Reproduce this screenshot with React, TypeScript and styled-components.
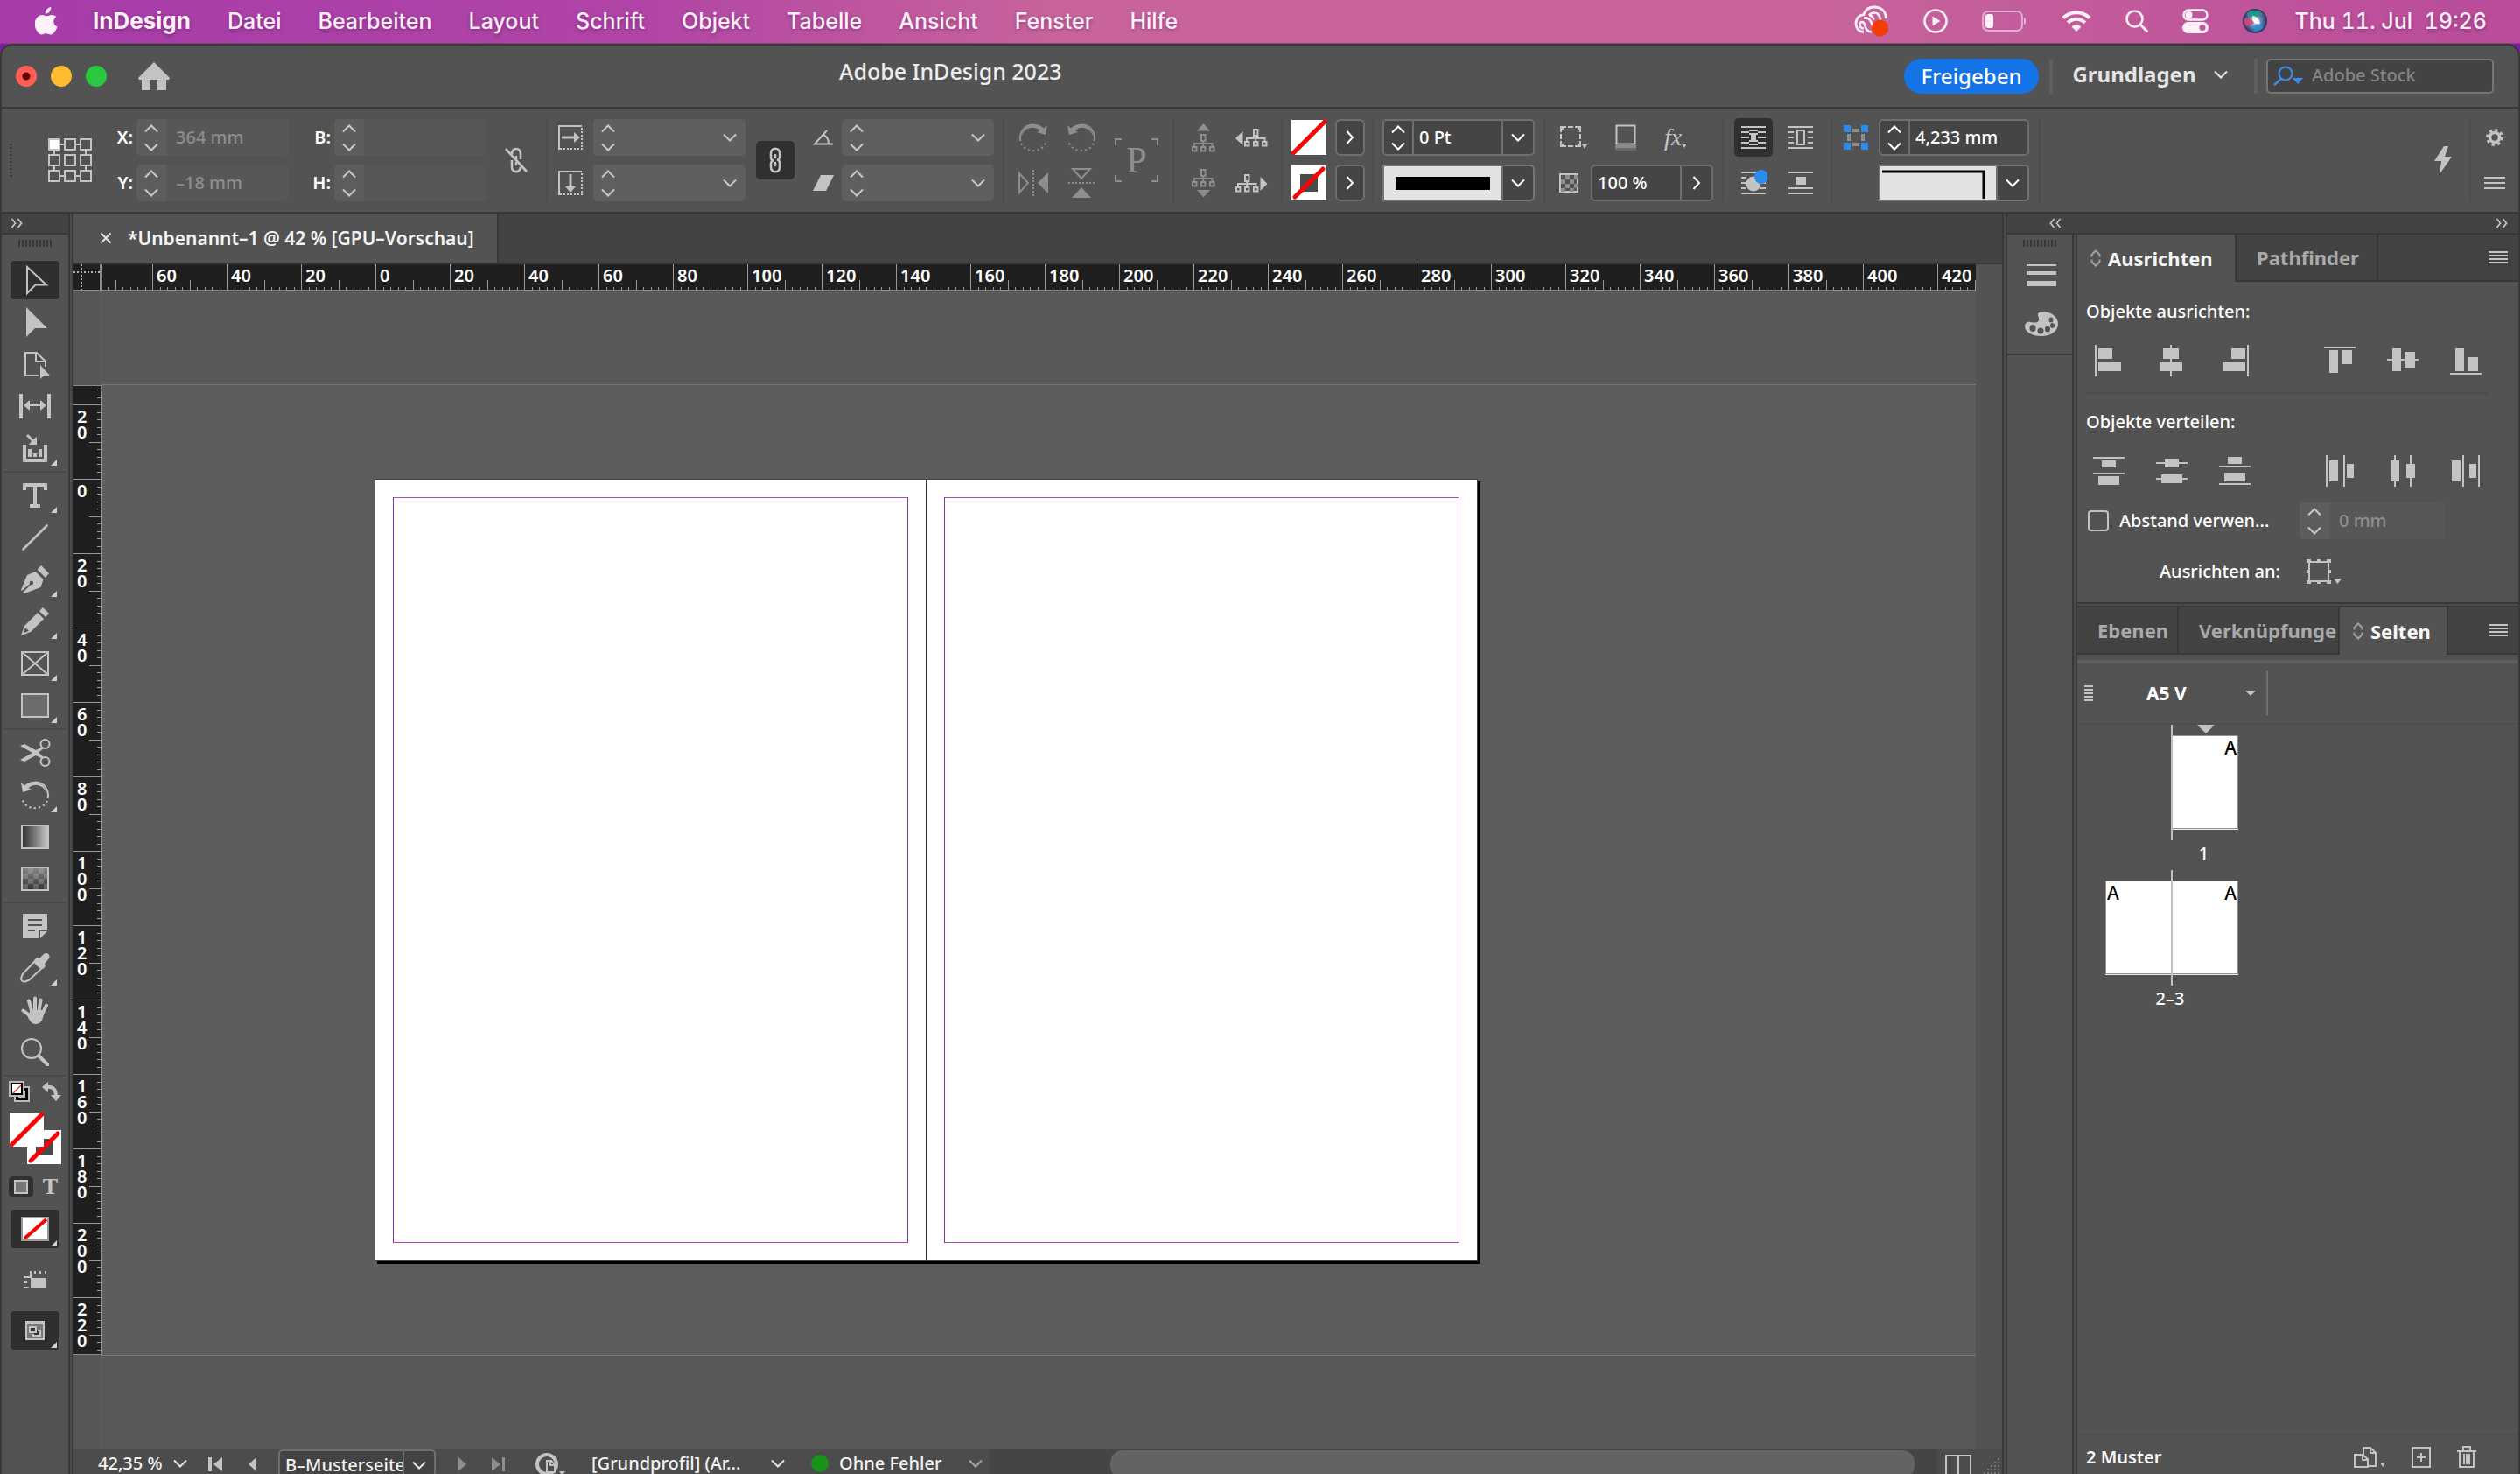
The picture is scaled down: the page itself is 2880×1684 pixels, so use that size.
import React from 'react';
import styled, { createGlobalStyle, css } from 'styled-components';

const LINE = '#383838';
const PANEL = '#535353';
const DARK = '#434343';
const ICON = '#c3c3c3';
const DIM = '#8e8e8e';
const UI = '"Noto Sans", "Open Sans", sans-serif';
const SYS = 'Inter, "Liberation Sans", sans-serif';

const Global = createGlobalStyle`
  *, *::before, *::after { box-sizing: border-box; }
  html, body, #root { height: 100%; }
  body { margin: 0; overflow: hidden; background: #7a1fa0; color: #f2f2f2; font: 500 20px/26px ${UI}; }
  button, input, select { font: inherit; color: inherit; margin: 0; padding: 0; border: 0; background: none; border-radius: 0; }
  button { display: flex; align-items: center; justify-content: center; cursor: pointer; }
  svg { display: block; flex: none; }
`;

/* ---------- shared pieces ---------- */

type IcProps = { w: number; h: number; c?: string; children: React.ReactNode };
const Ic = ({ w, h, c = ICON, children }: IcProps) => (
  <svg width={w} height={h} viewBox={`0 0 ${w} ${h}`} fill="none" stroke="none" color={c} aria-hidden="true">
    {children}
  </svg>
);

const Chevron = ({ c = '#e6e6e6' }: { c?: string }) => (
  <Ic w={16} h={10} c={c}><path d="M1 1.5 8 8.5 15 1.5" stroke="currentColor" strokeWidth="2" /></Ic>
);
const ChevronUp = ({ c = '#c8c8c8' }: { c?: string }) => (
  <Ic w={16} h={10} c={c}><path d="M1 8.5 8 1.5 15 8.5" stroke="currentColor" strokeWidth="2" /></Ic>
);
const ChevronRight = () => (
  <Ic w={10} h={16}><path d="M1.5 1 8 8 1.5 15" stroke="#fff" strokeWidth="2" /></Ic>
);
const Lines = ({ w = 22, n = 4, gap = 4, t = 2 }: { w?: number; n?: number; gap?: number; t?: number }) => (
  <Ic w={w} h={(n - 1) * gap + t}>
    {Array.from({ length: n }, (_, i) => <rect key={i} y={i * gap} width={w} height={t} fill="currentColor" />)}
  </Ic>
);
const DoubleArrow = ({ left }: { left?: boolean }) => (
  <Ic w={14} h={12}>
    <path d={left ? 'M5.5 1 1.5 6l4 5M12.5 1 8.5 6l4 5' : 'M1.5 1l4 5-4 5M8.5 1l4 5-4 5'} stroke="currentColor" strokeWidth="1.8" />
  </Ic>
);

const VDivider = styled.div`
  flex: none;
  width: 6px;
  border: solid ${LINE};
  border-width: 0 2px;
  background: #4b4b4b;
`;

/* ---------- macOS menu bar ---------- */

const Screen = styled.div`
  height: 100vh;
  display: flex;
  flex-direction: column;
`;

const MenuBar = styled.header`
  flex: none;
  height: 50px;
  display: flex;
  align-items: center;
  padding: 0 38px 2px 40px;
  background: linear-gradient(90deg, #a63caa 0%, #b044a6 25%, #c8649b 42%, #c8649b 72%, #b94b9b 100%);
  border-bottom: 1px solid #8f3f7c;
  font: 500 25px/32px ${SYS};
  color: #fdf0f8;
  text-shadow: 0 2px 4px rgba(60, 0, 60, 0.35);
`;

const Menus = styled.nav`
  display: flex;
  gap: 42px;
  margin-left: 40px;
`;

const MenuItem = styled.button<{ $bold?: boolean }>`
  font-weight: ${p => (p.$bold ? 700 : 500)};
  font-size: ${p => (p.$bold ? 26 : 25)}px;
  text-shadow: inherit;
`;

const Tray = styled.div`
  margin-left: auto;
  display: flex;
  align-items: center;
  gap: 39px;
`;

const Clock = styled.time`
  white-space: pre;
  margin-left: -8px;
  font-variant-numeric: tabular-nums;
`;

const Apple = () => (
  <Ic w={26} h={32} c="#fdf0f8">
    <path fill="currentColor" d="M18.3 0c.2 2-.6 3.9-1.7 5.2-1.2 1.4-3 2.4-4.8 2.3-.2-1.9.7-3.9 1.8-5.1C14.8 1 16.7.1 18.3 0ZM24.6 11.1c-2 1.2-3.3 3-3.3 5.4 0 2.7 1.7 5 4.2 6-.5 1.700-1.3 3.300-2.300 4.800-1.400 2.100-2.900 4.200-5.200 4.200-2.200 0-2.800-1.300-5.400-1.300-2.500 0-3.300 1.300-5.400 1.300-2.200 0-3.800-2.300-5.200-4.400C-1 22.700-1.300 15.500 2.600 11.700c1.500-1.700 3.600-2.700 5.700-2.700 2.200 0 3.500 1.300 5.300 1.300 1.700 0 2.800-1.300 5.300-1.300 1.900 0 4 .8 5.700 2.100Z" />
  </Ic>
);

const trayIcons = {
  cloud: (
    <Ic w={40} h={36} c="#fdf0f8">
      <path d="M11 30.500C5 30 2 26 2 21c0-6 4-10 9-10.500C13 4.500 18 2 23 2c8 0 13 5 13.500 13" stroke="currentColor" strokeWidth="2.800" />
      <path d="M20 30.500C14 30.500 13 25 11.500 21c-1-3-4.500-2.500-5 .5-.5 3 1.500 5 4.500 5" stroke="currentColor" strokeWidth="2.600" />
      <path d="M11 14.500c5-1 7.500 2 9 6 1 3 2 4.500 4 5M17 11.500c3-4 9-4 11.500 0 1 2 1.500 4 1.500 6" stroke="currentColor" strokeWidth="2.600" />
      <path d="M17 11.500c2.500 0 4.500 2 5.500 5" stroke="currentColor" strokeWidth="2.600" />
      <circle cx="29.500" cy="26" r="9.500" fill="#f23c00" />
    </Ic>
  ),
  play: (
    <Ic w={28} h={28} c="#fdf0f8">
      <circle cx="14" cy="14" r="12.500" stroke="currentColor" strokeWidth="2.600" />
      <path d="M10.500 8.500v11l9-5.500z" fill="currentColor" />
    </Ic>
  ),
  battery: (
    <Ic w={52} h={24} c="#fdf0f8">
      <rect x="1" y="1" width="45" height="22" rx="6" stroke="currentColor" strokeWidth="2" opacity=".55" />
      <rect x="4" y="4" width="9" height="16" rx="3" fill="currentColor" />
      <path d="M48 8c3 1 3 7 0 8z" fill="currentColor" opacity=".6" />
    </Ic>
  ),
  wifi: (
    <Ic w={34} h={26} c="#fdf0f8">
      <path d="M2 9.500a21 21 0 0 1 30 0M7.200 14.800a13.700 13.700 0 0 1 19.600 0" stroke="currentColor" strokeWidth="4" />
      <path d="M11.500 19.500a8 8 0 0 1 11 0L17 25z" fill="currentColor" />
    </Ic>
  ),
  search: (
    <Ic w={26} h={26} c="#fdf0f8">
      <circle cx="10.500" cy="10.500" r="9" stroke="currentColor" strokeWidth="2.600" />
      <path d="m17 17 7.500 7.500" stroke="currentColor" strokeWidth="3" strokeLinecap="round" />
    </Ic>
  ),
  control: (
    <Ic w={30} h={28} c="#fdf0f8">
      <rect x="1.500" y="1.500" width="27" height="11" rx="5.500" stroke="currentColor" strokeWidth="2.400" />
      <circle cx="7.500" cy="7" r="4" fill="currentColor" />
      <rect y="15" width="30" height="13" rx="6.500" fill="currentColor" />
      <circle cx="23" cy="21.500" r="3.500" fill="#c0559b" />
    </Ic>
  ),
  siri: (
    <svg width="28" height="28" viewBox="0 0 28 28" aria-hidden="true">
      <defs>
        <radialGradient id="orb"><stop offset="0" stopColor="#fff" /><stop offset=".45" stopColor="#6f8fc4" /><stop offset="1" stopColor="#2a2f5c" /></radialGradient>
      </defs>
      <circle cx="14" cy="14" r="14" fill="url(#orb)" />
      <path d="M4 6C8 0 20 0 25 8c-6-4-10 2-12 5C9 8 6 7 4 6Z" fill="#1f9d7a" opacity=".85" />
      <path d="M2 11c5-1 9 1 11 5-3 3-7 3-9 4-2-3-3-6-2-9Z" fill="#e0406e" opacity=".85" />
      <path d="M16 17c4 0 7 2 8 4-3 4-9 6-12 4 0-3 1-6 4-8Z" fill="#2c8fd0" opacity=".8" />
      <path d="M11 8c3 0 8 3 9 9-4 2-9-1-9-9Z" fill="#fff" opacity=".9" />
    </svg>
  ),
};

/* ---------- window and title bar ---------- */

const Window = styled.div`
  flex: 1;
  min-height: 0;
  display: flex;
  flex-direction: column;
  background: ${PANEL};
  border: solid ${LINE};
  border-width: 2px 2px 0;
  border-radius: 14px 14px 0 0;
  overflow: hidden;
`;

const TitleBar = styled.div`
  flex: none;
  height: 72px;
  border-bottom: 2px solid ${LINE};
  display: grid;
  grid-template-columns: 23fr auto 40fr;
  align-items: center;
`;

const TitleLeft = styled.div`
  display: flex;
  align-items: center;
  gap: 16px;
  padding-left: 16px;
`;

const Light = styled.button<{ $c: string }>`
  width: 24px;
  height: 24px;
  border-radius: 50%;
  background: ${p => p.$c};
`;

const HomeButton = styled.button`margin-left: 20px;`;

const WindowTitle = styled.h1`
  margin: 0;
  padding-bottom: 12px;
  font: 500 25px/32px ${UI};
  color: #ececec;
  white-space: nowrap;
`;

const TitleRight = styled.div`
  display: flex;
  align-items: center;
  justify-content: flex-end;
  padding-right: 28px;
  height: 40px;
`;

const ShareButton = styled.button`
  width: 154px;
  height: 40px;
  margin-right: 12px;
  border-radius: 20px;
  background: #1473e6;
  color: #fff;
  font: 500 24px/30px ${UI};
`;

const TitleRule = styled.i`
  width: 4px;
  height: 40px;
  background: #5f5f5f;
`;

const Workspace = styled.button`
  gap: 20px;
  width: 230px;
  padding: 0 8px 4px 0;
  font: 700 24px/30px ${UI};
  color: #e4e4e4;
`;

const StockSearch = styled.label`
  display: flex;
  align-items: center;
  gap: 10px;
  width: 260px;
  height: 40px;
  margin-left: 10px;
  padding-left: 6px;
  border: 2px solid #757575;
  border-radius: 5px;
  background: ${DARK};
  input { min-width: 0; flex: 1; outline: 0; padding-bottom: 2px; }
  input::placeholder { color: #858585; opacity: 1; }
`;

/* ---------- control bar ---------- */

const ControlBar = styled.div`
  flex: none;
  height: 120px;
  padding-top: 12px;
  border-bottom: 2px solid ${LINE};
  display: flex;
  align-items: flex-start;
`;

const Group = styled.div<{ $w?: number; $cols?: string; $align?: string; $first?: boolean }>`
  flex: ${p => (p.$w ? `0 0 ${p.$w}px` : '1')};
  height: 94px;
  display: grid;
  grid-template-columns: ${p => p.$cols || '1fr'};
  grid-template-rows: 42px 42px;
  row-gap: 10px;
  align-items: center;
  justify-items: center;
  justify-content: ${p => p.$align || 'start'};
  border-left: ${p => (p.$first ? '0' : '2px solid #4c4c4c')};
`;

const Tall = styled.div<{ $col: number; $start?: boolean }>`
  grid-row: 1 / 3;
  grid-column: ${p => p.$col};
  justify-self: ${p => (p.$start ? 'start' : 'center')};
  padding-left: ${p => (p.$start ? '9px' : '0')};
`;

const Row = styled.div<{ $gap: number }>`
  width: 100%;
  display: flex;
  align-items: center;
  gap: ${p => p.$gap}px;
  padding-left: 16px;
`;

const FieldLabel = styled.label`
  justify-self: end;
  padding-right: 4px;
  color: #fff;
  font-weight: 600;
`;

type Tone = 'off' | 'soft' | 'edit';
const FieldBox = styled.div<{ $tone: Tone; $w: number }>`
  display: flex;
  width: ${p => p.$w}px;
  height: 42px;
  border-radius: 5px;
  overflow: hidden;
  ${p => p.$tone === 'off' && css`background: #575757; color: ${DIM};`}
  ${p => p.$tone === 'soft' && css`background: #5f5f5f;`}
  ${p => p.$tone === 'edit' && css`background: #454545; border: 2px solid #6e6e6e; color: #fff;`}
  input { flex: 1; min-width: 0; outline: 0; }
`;

const Stepper = styled.div<{ $tone: Tone }>`
  flex: none;
  width: 34px;
  display: flex;
  flex-direction: column;
  background: ${p => (p.$tone === 'off' ? '#5d5d5d' : 'transparent')};
  border-right: ${p => (p.$tone === 'edit' ? '2px solid #6e6e6e' : '0')};
  button { flex: 1; }
`;

const DropButton = styled.button<{ $lined?: boolean }>`
  flex: none;
  width: 36px;
  border-left: ${p => (p.$lined ? '2px solid #6e6e6e' : '0')};
`;

const ValueInput = styled.input<{ $pad: number }>`padding-left: ${p => p.$pad}px;`;

type FieldProps = { id: string; label?: string; tone: Tone; w?: number; value?: string; drop?: boolean; pad?: number };
const Field = ({ id, label, tone, w = 174, value = '', drop, pad = 11 }: FieldProps) => {
  const c = tone === 'edit' ? '#fff' : '#c8c8c8';
  return (
    <FieldBox $tone={tone} $w={w}>
      <Stepper $tone={tone}>
        <button aria-label="Erhöhen"><ChevronUp c={c} /></button>
        <button aria-label="Verringern"><Chevron c={c} /></button>
      </Stepper>
      <ValueInput $pad={pad} id={id} aria-label={label} defaultValue={value} disabled={tone === 'off'} />
      {drop && <DropButton $lined={tone === 'edit'} aria-label="Liste öffnen"><Chevron c={c} /></DropButton>}
    </FieldBox>
  );
};

const IconButton = styled.button<{ $on?: boolean; $w?: number; $h?: number }>`
  width: ${p => (p.$w ? `${p.$w}px` : 'auto')};
  height: ${p => (p.$h ? `${p.$h}px` : 'auto')};
  border-radius: 5px;
  background: ${p => (p.$on ? '#303030' : 'transparent')};
`;

const BoxButton = styled.button`
  width: 34px;
  height: 42px;
  border: 2px solid #6e6e6e;
  border-radius: 6px;
  background: #454545;
`;

const StrokeSample = styled.div<{ $corner?: boolean }>`
  display: flex;
  width: ${p => (p.$corner ? 172 : 174)}px;
  height: 42px;
  border: 2px solid #757575;
  border-radius: 0 5px 5px 0;
  background: #454545;
`;

const Swatch = styled.div`
  flex: 1;
  display: flex;
  align-items: center;
  justify-content: center;
  background: #e2e2e2;
`;

const PText = styled.span`
  display: grid;
  place-items: center;
  font: 400 42px/50px "Liberation Serif", serif;
  color: ${DIM};
  svg, b { grid-area: 1 / 1; font-weight: 400; }
`;

const FxText = styled.span`
  display: flex;
  align-items: flex-end;
  font: italic 400 28px/30px "Liberation Serif", serif;
  color: ${ICON};
`;

const RefGrid = () => (
  <Ic w={50} h={50}>
    <path d="M14 7h4M32 7h4M14 43h4M32 43h4M7 14v4M43 14v4M7 32v4M43 32v4" stroke="currentColor" strokeWidth="2" />
    {[1, 19, 37].map(y => [1, 19, 37].map(x => (
      <rect key={`${x}-${y}`} x={x} y={y} width="12" height="12" stroke="currentColor" strokeWidth="2" fill={x + y === 2 ? '#fff' : 'none'} />
    )))}
  </Ic>
);

const ChainOff = () => (
  <Ic w={26} h={30}>
    <path d="M8 8c0-8 10-8 10 0v6M8 15v7c0 8 9 8 10 1" stroke="currentColor" strokeWidth="2.600" />
    <path d="M13 10v4M13 17v4" stroke="currentColor" strokeWidth="2.400" />
    <path d="M1 2l24 26" stroke="currentColor" strokeWidth="2.600" />
  </Ic>
);
const Chain = () => (
  <Ic w={14} h={30}>
    <path d="M5 16c-2-1-3-2-3-4V7c0-7 10-7 10 0v4c0 1-.5 2-1 3M9 14c2 1 3 2 3 4v5c0 7-10 7-10 0v-4c0-1 .5-2 1-3" stroke="currentColor" strokeWidth="2.600" />
    <path d="M7 9v3M7 18v3" stroke="currentColor" strokeWidth="2.600" strokeLinecap="round" />
  </Ic>
);
const ScaleIcon = ({ down }: { down?: boolean }) => (
  <Ic w={28} h={28}>
    <path d="M1 28V1h26" stroke="currentColor" strokeWidth="2" />
    <path d="M27 3v24M2 27h26" stroke="currentColor" strokeWidth="2" strokeDasharray="2 2" />
    {down
      ? <path d="M12.500 4h3v14h4.500l-6 7-6-7h4.500z" fill="currentColor" />
      : <path d="M4 12.500h14V8l7 6-7 6v-4.500H4z" fill="currentColor" />}
  </Ic>
);
const Angle = () => (
  <Ic w={24} h={18}><path d="M16 1 2 16.500h21M12 6c4 2 6 6 6 10" stroke="currentColor" strokeWidth="2" /></Ic>
);
const Shear = () => (
  <Ic w={24} h={18}><path d="M9 0h15l-9 18H0z" fill="currentColor" /></Ic>
);
const Rotate = ({ ccw, c = DIM }: { ccw?: boolean; c?: string }) => (
  <Ic w={34} h={34} c={c}>
    <g transform={ccw ? undefined : 'translate(34 0) scale(-1 1)'}>
      <path d="M31.500 21C34 12 27 2.500 18 2.500c-5 0-9 2-12 6" stroke="currentColor" strokeWidth="2" />
      <path d="M1 3l2 11 10-3-3.500-2C16 3 27 5 30.500 16 30 5 15-3 5 6.500z" fill="currentColor" />
      <path d="M3 23.500C8 35 25 35 31 24" stroke="currentColor" strokeWidth="2.200" strokeDasharray="2 3.400" />
    </g>
  </Ic>
);
const FlipH = () => (
  <Ic w={36} h={30} c={DIM}>
    <path d="M2 4v22l10-11z" stroke="currentColor" strokeWidth="2" />
    <path d="M35 3v24L23 15z" fill="currentColor" />
    <path d="M18 0v30" stroke="currentColor" strokeWidth="2" strokeDasharray="2 2" />
  </Ic>
);
const FlipV = () => (
  <Ic w={30} h={34} c={DIM}>
    <path d="M5 1h20L15 12z" stroke="currentColor" strokeWidth="2" />
    <path d="M4 34h22L15 22z" fill="currentColor" />
    <path d="M0 17h30" stroke="currentColor" strokeWidth="2" strokeDasharray="2 2" />
  </Ic>
);
const Tree = () => (
  <>
    <rect x="11" y="1" width="4.500" height="7" stroke="currentColor" strokeWidth="2" />
    <path d="M13.200 8v6M3 15v-4h20.500v4" stroke="currentColor" strokeWidth="2" />
    {[1, 11, 21].map(x => <rect key={x} x={x} y="15" width="4.500" height="4.500" stroke="currentColor" strokeWidth="2" />)}
  </>
);
const TreeV = ({ down }: { down?: boolean }) => (
  <Ic w={27} h={33} c={DIM}>
    <g transform={down ? undefined : 'translate(0 12)'}><Tree /></g>
    <path d={down ? 'M6 24h15l-7.500 8.500z' : 'M6 8.500h15L13.500 0z'} fill="currentColor" />
  </Ic>
);
const TreeH = ({ right }: { right?: boolean }) => (
  <Ic w={37} h={21}>
    <g transform={right ? undefined : 'translate(10 0)'}><Tree /></g>
    <path d={right ? 'M28.500 3v16l8-8z' : 'M8.500 3v16L0 11z'} fill="currentColor" />
  </Ic>
);
const NoneFill = ({ s = 40 }: { s?: number }) => (
  <Ic w={s} h={s}>
    <rect width={s} height={s} fill="#fff" />
    <path d={`M2 ${s - 2}L${s - 2} 2`} stroke="#f60505" strokeWidth="5" strokeLinecap="square" />
  </Ic>
);
const NoneStroke = ({ s = 40 }: { s?: number }) => (
  <Ic w={s} h={s}>
    <rect width={s} height={s} fill="#fff" />
    <rect x="10" y="10" width={s - 20} height={s - 20} fill="#4a4a4a" />
    <path d={`M4 ${s - 4}L${s - 4} 4`} stroke="#f60505" strokeWidth="5" strokeLinecap="round" />
  </Ic>
);
const Corners = () => (
  <Ic w={32} h={28}>
    <rect x="2" y="2" width="22" height="22" stroke="currentColor" strokeWidth="2" />
    <path d="M8 0h2v5H8zM16 0h2v5h-2zM8 21h2v5H8zM16 21h2v5h-2zM0 8h5v2H0zM0 16h5v2H0zM21 8h5v2h-5zM21 16h5v2h-5z" fill={PANEL} />
    <path d="M1 1h4v4H1zM21 1h4v4h-4zM1 21h4v4H1zM21 21h4v4h-4z" fill="currentColor" />
    <path d="M26 22h6l-3 5z" fill="currentColor" />
  </Ic>
);
const ShadowBox = () => (
  <Ic w={24} h={30}>
    <rect x="1.500" y="1.500" width="21" height="21" stroke="currentColor" strokeWidth="2" />
    <rect y="24" width="24" height="3" fill="currentColor" opacity=".5" />
    <rect y="27" width="24" height="3" fill="currentColor" opacity=".2" />
  </Ic>
);
const Checker = () => (
  <Ic w={22} h={22}>
    <rect x="1" y="1" width="20" height="20" stroke="currentColor" strokeWidth="2" />
    <path d="M7 2h5v5H7zM17 2h4v5h-4zM2 7h5v5H2zM12 7h5v5h-5zM7 12h5v5H7zM17 12h4v5h-4zM2 17h5v4H2zM12 17h5v4h-5z" fill="#8c8c8c" />
  </Ic>
);
const Wrap = ({ kind }: { kind: 'none' | 'box' | 'shape' | 'jump' }) => (
  <Ic w={32} h={30}>
    {kind === 'jump' ? (
      <>
        <path d="M2 3h28M2 21h28M2 27h28" stroke="currentColor" strokeWidth="2" />
        <rect x="10" y="8" width="12" height="9" fill="currentColor" />
      </>
    ) : (
      <>
        <path d="M2 3h28M2 27h28" stroke="currentColor" strokeWidth="2" />
        {kind === 'none'
          ? <path d="M2 9h9M21 9h9M2 15h9M21 15h9M2 21h9M21 21h9M11 7h10M11 11h10M13 13h6M13 17h6M11 19h10M11 23h10M13 15h6" stroke="currentColor" strokeWidth="2" />
          : <path d="M2 9h6M2 15h6M2 21h6M24 9h6M24 15h6M24 21h6" stroke="currentColor" strokeWidth="2" />}
        {kind === 'box' && <path d="M12 7h8v16h-8z" stroke="currentColor" strokeWidth="2" />}
        {kind === 'shape' && <><circle cx="16" cy="16" r="8.500" fill="currentColor" /><circle cx="25" cy="8" r="8" fill="#2b8ceb" /></>}
      </>
    )}
  </Ic>
);
const CornerOptions = () => (
  <Ic w={28} h={28}>
    <path d="M0 0h8v8H0zM20 0h8v8h-8zM0 20h8v8H0zM20 20h8v8h-8z" fill="#2b8ceb" />
    <path d="M10 4h8v4h-8zM10 20h8v4h-8zM4 10h4v8H4zM20 10h4v8h-4z" fill="#8e8e8e" />
  </Ic>
);
const Bolt = () => (
  <Ic w={20} h={32}><path d="M11 0 0 17h8L6 32 20 12h-8l4-12z" fill="currentColor" /></Ic>
);
const Gear = () => (
  <Ic w={20} h={20}>
    <circle cx="10" cy="10" r="5.500" stroke="currentColor" strokeWidth="3.600" />
    <circle cx="10" cy="10" r="8.500" stroke="currentColor" strokeWidth="3" strokeDasharray="3.340 3.340" />
  </Ic>
);

/* ---------- tool box ---------- */

const Body = styled.div`
  flex: 1;
  min-height: 0;
  display: flex;
`;

const ToolColumn = styled.aside`
  flex: none;
  width: 76px;
  display: flex;
  flex-direction: column;
`;

const ColumnHead = styled.div<{ $between?: boolean }>`
  flex: none;
  height: 24px;
  display: flex;
  align-items: center;
  background: ${DARK};
  border-bottom: 2px solid ${LINE};
  padding: ${p => (p.$between ? '0 12px 0 48px' : '0 10px')};
  justify-content: ${p => (p.$between ? 'space-between' : 'flex-start')};
`;

const Grip = styled.i`
  display: block;
  flex: none;
  width: 38px;
  height: 8px;
  margin: 6px auto 2px;
  background: repeating-linear-gradient(90deg, #383838 0 2px, transparent 2px 4px);
`;

const Tools = styled.div`
  display: flex;
  flex-direction: column;
  align-items: center;
  gap: 4px;
  padding-top: 14px;
`;

const ToolRule = styled.i`
  width: 72px;
  height: 2px;
  background: #4a4a4a;
`;

const ToolButton = styled.button<{ $on?: boolean; $more?: boolean }>`
  position: relative;
  width: 56px;
  height: 44px;
  border-radius: 4px;
  background: ${p => (p.$on ? '#2f2f2f' : 'transparent')};
  ${p => p.$more && css`
    &::after {
      content: '';
      position: absolute;
      right: 3px;
      bottom: 2px;
      border: solid transparent;
      border-width: 0 0 7px 7px;
      border-bottom-color: #d0d0d0;
    }
  `}
`;

const Pair = styled.div<{ $h: number }>`
  display: flex;
  align-items: center;
  justify-content: space-between;
  width: 60px;
  height: ${p => p.$h}px;
`;

const FillStroke = styled.div`
  display: grid;
  grid-template-columns: 20px 19px 19px;
  grid-template-rows: 20px 19px 19px;
  margin: 7px 0 11px;
`;
const FillCell = styled.button`grid-area: 1 / 1 / 3 / 3; z-index: 1; border: solid ${PANEL}; border-width: 0 1px 1px 0;`;
const StrokeCell = styled.button`grid-area: 2 / 2 / 4 / 4;`;

const TypeText = styled.span`
  font: 700 26px/24px "Liberation Serif", serif;
  color: ${ICON};
  padding-right: 4px;
`;

const tools: Array<{ name: string; more?: boolean; on?: boolean; icon: React.ReactNode } | 'rule'> = [
  { name: 'Auswahl', on: true, icon: <Ic w={36} h={36}><path d="M9 3v30l9.500-9.500H31z" stroke="currentColor" strokeWidth="2" /></Ic> },
  { name: 'Direktauswahl', icon: <Ic w={36} h={36}><path d="M8 1v34l10-10h14z" fill="currentColor" /></Ic> },
  { name: 'Seite', icon: (
    <Ic w={36} h={36}>
      <path d="M22 31H7V5h13l10 10v6M19 5v10h11" stroke="currentColor" strokeWidth="2" />
      <path d="M24 19v16l4-4h7z" fill="currentColor" />
    </Ic>
  ) },
  { name: 'Lücke', icon: (
    <Ic w={36} h={28}><path d="M0 0h4v28H0zM32 0h4v28h-4zM5 13l7-6v5h12V7l7 6-7 6v-5H12v5z" fill="currentColor" /></Ic>
  ) },
  { name: 'Inhaltsaufnahme', more: true, icon: (
    <Ic w={28} h={32}>
      <path d="M0 12h4v16h20V12h4v20H0z" fill="currentColor" />
      <path d="M6 17h4v4H6zM18 17h4v4h-4zM6 22h4v4H6zM12 22h4v4h-4zM18 22h4v4h-4zM4 2l2-2 6 6 4-3v9H7l3-4z" fill="currentColor" />
    </Ic>
  ) },
  'rule',
  { name: 'Text', more: true, icon: <Ic w={28} h={28}><path d="M0 0h28v8h-4V4h-8v20h4v4H8v-4h4V4H4v4H0z" fill="currentColor" /></Ic> },
  { name: 'Linie', icon: <Ic w={30} h={30}><path d="M1.500 28.500l27-27" stroke="currentColor" strokeWidth="2.600" strokeLinecap="round" /></Ic> },
  { name: 'Zeichenstift', more: true, icon: (
    <Ic w={32} h={32}>
      <path d="M23 0l9 9-4 5-9.500-9.500zM16.500 7l9 9-3 9L4 32l-2-1 9-9c3 1 4-3 2-4s-4 0-3 3L1 29 0 28 7 11z" fill="currentColor" />
    </Ic>
  ) },
  { name: 'Buntstift', more: true, icon: (
    <Ic w={32} h={32}>
      <path d="M25 0l7 7-4 4-7-7zM19 6l7 7L11 28 0 32l4-11zM5 23l-2 6 6-2z" fill="currentColor" fillRule="evenodd" />
    </Ic>
  ) },
  { name: 'Rechteckrahmen', more: true, icon: <Ic w={32} h={28}><path d="M1 1h30v26H1zL31 27M31 1 1 27" stroke="currentColor" strokeWidth="2" /></Ic> },
  { name: 'Rechteck', more: true, icon: <Ic w={32} h={28}><rect x="1" y="1" width="30" height="26" fill="#6c6c6c" stroke="currentColor" strokeWidth="2" /></Ic> },
  'rule',
  { name: 'Schere', icon: (
    <Ic w={36} h={32}>
      <circle cx="29.500" cy="6" r="5" stroke="currentColor" strokeWidth="2" />
      <circle cx="29.500" cy="26" r="5" stroke="currentColor" strokeWidth="2" />
      <path d="M1 8l5-2 13 7 7-4 2 2-6 4.500 6 5.500-2 2-7-4-13 7-5-2 14-8z" fill="currentColor" />
    </Ic>
  ) },
  { name: 'Drehen', more: true, icon: <Rotate ccw c={ICON} /> },
  { name: 'Verlaufsfarbfeld', icon: (
    <Ic w={32} h={28}>
      <defs><linearGradient id="grad"><stop offset="0" stopColor="#2c2c2c" /><stop offset="1" stopColor="#c8c8c8" /></linearGradient></defs>
      <rect x="1" y="1" width="30" height="26" fill="url(#grad)" stroke="currentColor" strokeWidth="2" />
    </Ic>
  ) },
  { name: 'Weiche Verlaufskante', icon: (
    <Ic w={32} h={28}>
      <defs><linearGradient id="feather" x2="0" y2="1"><stop offset="0" stopColor="#8a8a8a" /><stop offset="1" stopColor="#303030" /></linearGradient></defs>
      <rect x="1" y="1" width="30" height="26" fill="url(#feather)" stroke="currentColor" strokeWidth="2" />
      <path d="M8 2h6v6H8zM20 2h6v6h-6zM2 8h6v6H2zM14 8h6v6h-6zM26 8h4v6h-4zM8 14h6v6H8zM20 14h6v6h-6zM2 20h6v6H2zM14 20h6v6h-6zM26 20h4v6h-4z" fill="#b0b0b0" opacity=".35" />
    </Ic>
  ) },
  'rule',
  { name: 'Notiz', icon: (
    <Ic w={28} h={28}>
      <path d="M0 0h28v18H18v10H0zM6 6v2h16V6zM6 12v2h16v-2zM6 18v2h8v-2zM20 20h8l-8 8z" fill="currentColor" fillRule="evenodd" />
    </Ic>
  ) },
  { name: 'Pipette', more: true, icon: (
    <Ic w={34} h={34}>
      <path d="M17 9 3 23.500c-1 2-1 3-2 5.500 0 2 2 4 4.500 3.500 2-.5 3-1 5-2L25 17" stroke="currentColor" strokeWidth="2" />
      <path d="M16 8l3-3 3 1 5-5c4-3 8 1 6 5l-5 6 1 3-3 3-4-1-6-6z" fill="currentColor" />
    </Ic>
  ) },
  { name: 'Hand', icon: (
    <Ic w={32} h={32}>
      <path d="M2.500 16.500 11 23M9 5.500l3.500 13M16 2.500V19M22.500 4.500 20 20M29 10.500 24 21" stroke="currentColor" strokeWidth="4" strokeLinecap="round" />
      <path d="M9 20l2-4h15c0 9-2 16-9.500 16C12 32 9 27 7 22z" fill="currentColor" />
    </Ic>
  ) },
  { name: 'Zoom', icon: (
    <Ic w={32} h={32}>
      <circle cx="12" cy="12" r="11" stroke="currentColor" strokeWidth="2" />
      <path d="M20 20l10.500 10.500" stroke="currentColor" strokeWidth="4" strokeLinecap="round" />
    </Ic>
  ) },
  'rule',
];

/* ---------- document area ---------- */

const DocArea = styled.main`
  flex: 1;
  min-width: 0;
  display: flex;
  flex-direction: column;
`;

const TabStrip = styled.div`
  flex: none;
  height: 58px;
  display: flex;
  background: ${DARK};
  border-bottom: 2px solid ${LINE};
`;

const DocTab = styled.div`
  display: flex;
  align-items: center;
  gap: 18px;
  padding: 0 26px 0 30px;
  background: ${PANEL};
  border-right: 2px solid ${LINE};
  color: #f4f4f4;
  font-weight: 600;
  font-size: 21px;
  white-space: nowrap;
`;

const RulerRow = styled.div`
  flex: none;
  height: 31px;
  display: flex;
`;

const RulerCorner = styled.div`
  flex: none;
  width: 32px;
  background: #1f1f1f;
  border: solid #8a8a8a;
  border-width: 0 2px 2px 0;
`;

const HStrip = styled.div`
  flex: 1;
  min-width: 0;
  display: flex;
  overflow-x: clip;
  background: #1f1f1f;
  border-bottom: 2px solid #8a8a8a;
`;

const HCell = styled.div`
  flex: none;
  width: 85px;
  display: grid;
  border-left: 1px solid #9a9a9a;
  font: 600 20px/26px ${UI};
  color: #fff;
  &:first-child { margin-left: -27px; }
  span, svg { grid-area: 1 / 1; }
  span { padding-left: 4px; height: 29px; }
  svg { align-self: end; }
`;

const Gutter = styled.div`
  flex: none;
  width: 30px;
  background: ${PANEL};
`;

const Band = styled.div<{ $low?: boolean }>`
  flex: none;
  height: ${p => (p.$low ? 108 : 107)}px;
  display: flex;
  > i { flex: none; width: 32px; background: #565656; border-right: 1px solid #606060; }
  > b { flex: 1; background: #585858; border: solid #757575; border-width: ${p => (p.$low ? '1px 0 0' : '0 0 1px')}; }
`;

const CanvasRow = styled.div`
  flex: 1;
  min-height: 0;
  display: flex;
`;

const VStrip = styled.div`
  flex: none;
  width: 32px;
  overflow-y: clip;
  background: #1f1f1f;
  border: solid #8a8a8a;
  border-width: 1px 1px 1px 0;
`;

const VCell = styled.div`
  height: 85px;
  display: flex;
  justify-content: space-between;
  border-top: 1px solid #9a9a9a;
  font: 600 20px/18px ${UI};
  color: #fff;
  &:first-child { margin-top: -64px; }
  span { width: 17px; padding: 4px 0 0 4px; word-break: break-all; }
`;

const Pasteboard = styled.div`
  position: relative;
  flex: 1;
  background: #5d5d5d;
`;

/* The spread is an object on the free pasteboard, measured from the ruler origin. */
const Spread = styled.div`
  position: absolute;
  left: 312px;
  top: 107px;
  width: 1261px;
  height: 894px;
  display: flex;
  border: 1px solid #444;
  background: #fff;
  box-shadow: 4px 4px 0 -1px #000, 3px 3px 0 0 #000;
`;

const PageArea = styled.div`
  flex: 1;
  padding: 20px;
  & + & { flex: none; width: 630px; border-left: 1px solid #333; }
  &::before {
    content: '';
    display: block;
    height: 100%;
    border: 1px solid;
    border-color: #ae4cbd #7a35a4;
  }
`;

const hMarks = Array.from({ length: 26 }, (_, i) => Math.abs(i * 20 - 80));
const vMarks = Array.from({ length: 14 }, (_, i) => Math.abs(i * 20 - 40));
const minor = [1, 2, 3, 4, 5, 6, 7, 8, 9];

const HTicks = () => (
  <Ic w={84} h={12} c="#9a9a9a">
    {minor.map(i => {
      const t = i === 5 ? 11 : 3;
      return <rect key={i} x={Math.round(i * 8.5) - 1} y={12 - t} width="1" height={t} fill="currentColor" />;
    })}
  </Ic>
);
const VTicks = () => (
  <Ic w={14} h={84} c="#9a9a9a">
    {minor.map(i => {
      const t = i === 5 ? 13 : 4;
      return <rect key={i} y={Math.round(i * 8.5) - 1} x={14 - t} height="1" width={t} fill="currentColor" />;
    })}
  </Ic>
);

/* ---------- status bar ---------- */

const StatusBar = styled.footer`
  flex: none;
  height: 28px;
  display: flex;
  align-items: flex-start;
  background: #4c4c4c;
  overflow: hidden;
`;

const StatusSelect = styled.div<{ $w: number; $ml: number; $boxed?: boolean }>`
  flex: none;
  display: grid;
  grid-template-columns: 1fr auto;
  align-items: center;
  height: 32px;
  width: ${p => p.$w}px;
  margin-left: ${p => p.$ml}px;
  select { grid-area: 1 / 1 / 2 / 3; appearance: none; outline: 0; height: 32px; padding-right: 24px; line-height: 32px; overflow: hidden; }
  svg { grid-area: 1 / 2; pointer-events: none; }
  ${p => p.$boxed && css`
    grid-template-columns: 1fr 34px;
    justify-items: center;
    border: 2px solid #6e6e6e;
    border-radius: 5px;
    background: #434343;
    padding-left: 6px;
    select { grid-area: 1 / 1; width: 100%; padding: 0; border-right: 2px solid #6e6e6e; }
  `}
`;

const StatusIcon = styled.button<{ $w: number }>`
  flex: none;
  width: ${p => p.$w}px;
  height: 34px;
`;

const Dot = styled.i`
  flex: none;
  width: 20px;
  height: 20px;
  margin: 6px 0 0 30px;
  border-radius: 50%;
  background: #189318;
`;

const ScrollTrack = styled.div`
  flex: 1;
  height: 28px;
  margin-left: 8px;
  padding: 1px 26px 0 138px;
  background: #454545;
  &::before {
    content: '';
    display: block;
    height: 32px;
    border-radius: 14px;
    background: #636363;
  }
`;

const StatusEnd = styled.div`
  flex: none;
  width: 74px;
  display: flex;
  align-items: flex-start;
  gap: 14px;
  padding: 6px 0 0 9px;
`;

/* ---------- right docks ---------- */

const RightSide = styled.aside`
  flex: none;
  width: 584px;
  display: flex;
  flex-direction: column;
`;

const RightBody = styled.div`
  flex: 1;
  min-height: 0;
  display: flex;
`;

const IconDock = styled.div`
  flex: none;
  width: 74px;
`;

const DockSet = styled.div`
  display: flow-root;
  height: 138px;
  border-bottom: 2px solid ${LINE};
`;

const DockButtons = styled.div`
  display: flex;
  flex-direction: column;
  align-items: center;
  gap: 28px;
  padding: 18px 0 0 4px;
`;

const Panels = styled.div`
  flex: 1;
  min-width: 0;
  display: flex;
  flex-direction: column;
`;

const PanelTabs = styled.div`
  flex: none;
  height: 54px;
  display: flex;
`;

const PanelTab = styled.button<{ $on?: boolean; $w: number }>`
  flex: none;
  width: ${p => p.$w}px;
  gap: 8px;
  justify-content: flex-start;
  overflow: hidden;
  white-space: nowrap;
  padding-left: ${p => (p.$on ? 15 : 23)}px;
  font: 700 22px/30px ${UI};
  color: ${p => (p.$on ? '#f6f6f6' : '#a9a9a9')};
  background: ${p => (p.$on ? PANEL : DARK)};
  border: solid ${LINE};
  border-width: ${p => (p.$on ? '0 2px 0 0' : '0 2px 2px 0')};
`;

const TabMenu = styled.div`
  flex: 1;
  display: flex;
  align-items: center;
  justify-content: flex-end;
  padding-right: 12px;
  background: ${DARK};
  border-bottom: 2px solid ${LINE};
`;

const AlignBody = styled.section`
  flex: none;
  height: 366px;
  padding: 22px 34px 0 10px;
`;

const PanelHeading = styled.h2`
  margin: 0;
  color: #fff;
  font: 500 20px/24px ${UI};
`;

const AlignRow = styled.div<{ $rule?: boolean }>`
  display: flex;
  justify-content: space-between;
  height: ${p => (p.$rule ? 82 : 56)}px;
  margin-bottom: ${p => (p.$rule ? 20 : 10)}px;
  padding: 26px 8px 0;
  border-bottom: ${p => (p.$rule ? '2px solid #4c4c4c' : '0')};
`;

const AlignSet = styled.div`
  display: flex;
  align-items: flex-start;
  gap: 36px;
`;

const SpacingRow = styled.div`
  display: flex;
  align-items: center;
  height: 44px;
  margin-top: 23px;
  label { display: flex; align-items: center; gap: 12px; width: 244px; color: #fff; white-space: nowrap; }
`;

const Check = styled.input`
  appearance: none;
  flex: none;
  width: 24px;
  height: 24px;
  &&& { border: 2px solid ${ICON}; border-radius: 4px; margin-left: 2px; }
`;

const AlignTo = styled.div`
  display: flex;
  align-items: center;
  gap: 30px;
  padding: 22px 0 0 84px;
  color: #fff;
`;

const PanelGap = styled.div`
  flex: none;
  height: 6px;
  border: solid ${LINE};
  border-width: 2px 0;
  background: #4b4b4b;
`;

const PagesHead = styled.div`
  flex: none;
  height: 74px;
  display: flex;
  align-items: center;
  margin-top: 6px;
  padding-left: 8px;
  border-top: 4px solid #5e5e5e;
  border-bottom: 2px solid #4e4e4e;
`;

const SizeSelect = styled.div`
  display: grid;
  align-items: center;
  width: 200px;
  height: 50px;
  padding-right: 12px;
  border-right: 2px solid #6f6f6f;
  select { grid-area: 1 / 1; appearance: none; outline: 0; padding-left: 61px; color: #fff; font-weight: 700; font-size: 21px; }
  svg { grid-area: 1 / 1; justify-self: end; pointer-events: none; }
`;

const PageList = styled.ol`
  flex: 1;
  min-height: 0;
  margin: 0;
  padding: 0 0 0 32px;
  list-style: none;
`;

const PageItem = styled.li`
  width: 152px;
  height: 166px;
  display: grid;
  grid-template-columns: 75px 2px 75px;
  grid-template-rows: 12px 107px 13px 34px;
`;

const Spine = styled.i`
  grid-area: 1 / 2 / 4 / 3;
  background: #c0c0c0;
`;

const Thumb = styled.button<{ $left?: boolean }>`
  grid-area: ${p => (p.$left ? '2 / 1' : '2 / 3')};
  align-items: flex-start;
  justify-content: ${p => (p.$left ? 'flex-start' : 'flex-end')};
  padding: 0 1px;
  background: #fff;
  border: solid #909090;
  border-width: ${p => (p.$left ? '1px 0 1px 1px' : '1px 1px 1px 0')};
  box-shadow: 0 1px 0 #f0f0f0;
  color: #000;
  font: 500 21px/26px ${UI};
`;

const PageNo = styled.span<{ $whole?: boolean }>`
  grid-area: ${p => (p.$whole ? '4 / 1 / 5 / 4' : '4 / 3')};
  justify-self: center;
  padding: 2px 4px 0 0;
  color: #fff;
`;

const Marker = styled.svg`
  grid-area: 1 / 3;
  justify-self: center;
`;

const PagesFoot = styled.div`
  flex: none;
  height: 46px;
  display: flex;
  align-items: center;
  gap: 30px;
  padding: 6px 48px 0 10px;
  border-top: 2px solid #4e4e4e;
  font-weight: 600;
  color: #f6f6f6;
  span { margin-right: auto; }
`;

const Sort = () => (
  <Ic w={12} h={20} c="#a0a0a0"><path d="M1.500 8.500V6L6 1.500 10.500 6v2.500M1.500 11.500V14L6 18.500l4.500-4.500v-2.500" stroke="currentColor" strokeWidth="2" /></Ic>
);

const alignA = [
  ['Linke Kanten', 'M2 0h2v36H2zM6 4h16v12H6zM6 20h26v10H6z'],
  ['Horizontal zentrieren', 'M16 0h2v36h-2zM8 4h18v12H8zM4 20h26v10H4z'],
  ['Rechte Kanten', 'M32 0h2v36h-2zM14 4h16v12H14zM4 20h26v10H4z'],
];
const alignB = [
  ['Obere Kanten', 'M0 2h36v2H0zM6 6h10v26H6zM20 6h12v16H20z'],
  ['Vertikal zentrieren', 'M0 16h36v2H0zM6 4h10v26H6zM20 8h12v18H20z'],
  ['Untere Kanten', 'M0 32h36v2H0zM6 4h10v26H6zM20 14h12v16H20z'],
];
const distA = [
  ['Obere Kanten verteilen', 'M0 2h36v2H0zM10 6h16v8H10zM0 20h36v2H0zM6 24h24v10H6z'],
  ['Vertikal verteilen', 'M0 8h36v2H0zM10 4h16v10H10zM0 26h36v2H0zM6 22h24v10H6z'],
  ['Untere Kanten verteilen', 'M10 2h16v8H10zM0 12h36v2H0zM6 20h24v10H6zM0 32h36v2H0z'],
];
const distB = [
  ['Linke Kanten verteilen', 'M2 0h2v36H2zM6 6h10v24H6zM22 0h2v36h-2zM26 10h8v16h-8z'],
  ['Horizontal verteilen', 'M8 0h2v36H8zM4 6h10v24H4zM26 0h2v36h-2zM22 10h10v16H22z'],
  ['Rechte Kanten verteilen', 'M2 6h10v24H2zM14 0h2v36h-2zM22 10h8v16h-8zM32 0h2v36h-2z'],
];
const AlignButtons = ({ set }: { set: string[][] }) => (
  <AlignSet>
    {set.map(([name, d]) => <button key={name} aria-label={name}><Ic w={36} h={36}><path d={d} fill="currentColor" /></Ic></button>)}
  </AlignSet>
);

const menuNames = ['InDesign', 'Datei', 'Bearbeiten', 'Layout', 'Schrift', 'Objekt', 'Tabelle', 'Ansicht', 'Fenster', 'Hilfe'];

export default function App() {
  return (
    <Screen>
      <Global />
      <MenuBar>
        <Apple />
        <Menus>
          {menuNames.map((m, i) => <MenuItem key={m} $bold={i === 0}>{m}</MenuItem>)}
        </Menus>
        <Tray>
          {trayIcons.cloud}{trayIcons.play}{trayIcons.battery}{trayIcons.wifi}{trayIcons.search}{trayIcons.control}{trayIcons.siri}
          <Clock>{'Thu 11. Jul  19:26'}</Clock>
        </Tray>
      </MenuBar>

      <Window>
        <TitleBar>
          <TitleLeft>
            <Light $c="radial-gradient(circle, #6b0000 0 4px, #ff5f57 5px)" aria-label="Schließen" />
            <Light $c="#febc2e" aria-label="Minimieren" />
            <Light $c="#28c840" aria-label="Vollbild" />
            <HomeButton aria-label="Startseite">
              <Ic w={36} h={32}><path d="M18 0 0 18l1 2h3v12h10V20h8v12h10V20h3l1-2z" fill="currentColor" /></Ic>
            </HomeButton>
          </TitleLeft>
          <WindowTitle>Adobe InDesign 2023</WindowTitle>
          <TitleRight>
            <ShareButton>Freigeben</ShareButton>
            <TitleRule />
            <Workspace>Grundlagen <Chevron /></Workspace>
            <TitleRule />
            <StockSearch>
              <Ic w={34} h={24} c="#3b8fe8">
                <circle cx="14" cy="9" r="7.500" stroke="currentColor" strokeWidth="2" />
                <path d="M9 15l-8 7" stroke="currentColor" strokeWidth="2.600" />
                <path d="M22 14h12l-6 7z" fill="currentColor" />
              </Ic>
              <input placeholder="Adobe Stock" aria-label="Adobe Stock" />
            </StockSearch>
          </TitleRight>
        </TitleBar>

        <ControlBar>
          <Group $first $w={622} $cols="53px 50px 51px 174px 52px 174px 68px">
            <Tall $col={1} $start><Ic w={4} h={38}>{Array.from({ length: 10 }, (_, i) => <rect key={i} y={i * 4} width="3" height="2" fill="#3a3a3a" />)}</Ic></Tall>
            <Tall $col={2}><RefGrid /></Tall>
            <FieldLabel htmlFor="x">X:</FieldLabel>
            <Field id="x" tone="off" value="364 mm" />
            <FieldLabel htmlFor="b">B:</FieldLabel>
            <Field id="b" tone="off" />
            <Tall $col={7}><IconButton aria-label="Proportionen"><ChainOff /></IconButton></Tall>
            <FieldLabel htmlFor="y">Y:</FieldLabel>
            <Field id="y" tone="off" value="–18 mm" />
            <FieldLabel htmlFor="h">H:</FieldLabel>
            <Field id="h" tone="off" />
          </Group>
          <Group $w={522} $cols="52px 174px 68px 42px 174px">
            <ScaleIcon />
            <Field id="sx" label="X-Skalierung" tone="soft" drop />
            <Tall $col={3}><IconButton $on $w={44} $h={44} aria-label="Skalierung verketten"><Chain /></IconButton></Tall>
            <Angle />
            <Field id="rot" label="Drehwinkel" tone="soft" drop />
            <ScaleIcon down />
            <Field id="sy" label="Y-Skalierung" tone="soft" drop />
            <Shear />
            <Field id="shear" label="Scherwinkel" tone="soft" drop />
          </Group>
          <Group $w={194} $cols="66px 44px 82px">
            <IconButton aria-label="Im UZS drehen"><Rotate /></IconButton>
            <IconButton aria-label="Gegen UZS drehen"><Rotate ccw /></IconButton>
            <Tall $col={3}>
              <PText>
                <Ic w={50} h={50} c={DIM}><path d="M1 8V1h7M42 1h7v7M49 42v7h-7M8 49H1v-7" stroke="currentColor" strokeWidth="2" /></Ic>
                <b>P</b>
              </PText>
            </Tall>
            <IconButton aria-label="Horizontal spiegeln"><FlipH /></IconButton>
            <IconButton aria-label="Vertikal spiegeln"><FlipV /></IconButton>
          </Group>
          <Group $w={124} $cols="66px 44px">
            <IconButton aria-label="Container wählen"><TreeV /></IconButton>
            <IconButton aria-label="Vorheriges Objekt"><TreeH /></IconButton>
            <IconButton aria-label="Inhalt wählen"><TreeV down /></IconButton>
            <IconButton aria-label="Nächstes Objekt"><TreeH right /></IconButton>
          </Group>
          <Group $w={104} $cols="60px 34px">
            <NoneFill /><BoxButton aria-label="Fläche"><ChevronRight /></BoxButton>
            <NoneStroke /><BoxButton aria-label="Kontur"><ChevronRight /></BoxButton>
          </Group>
          <Group $w={196} $cols="174px" $align="center">
            <Field id="weight" label="Konturstärke" tone="edit" value="0 Pt" drop pad={6} />
            <StrokeSample>
              <Swatch><Ic w={108} h={15}><rect width="108" height="15" fill="#000" /></Ic></Swatch>
              <DropButton $lined aria-label="Konturart"><Chevron c="#fff" /></DropButton>
            </StrokeSample>
          </Group>
          <Group $w={204}>
            <Row $gap={32}>
              <Corners /><ShadowBox />
              <FxText>fx<Ic w={6} h={10}><path d="M0 2h6l-3 5z" fill="currentColor" /></Ic></FxText>
            </Row>
            <Row $gap={14}>
              <Checker />
              <FieldBox $tone="edit" $w={140}>
                <ValueInput $pad={6} defaultValue="100 %" aria-label="Deckkraft" />
                <DropButton $lined aria-label="Deckkraft wählen"><ChevronRight /></DropButton>
              </FieldBox>
            </Row>
          </Group>
          <Group $w={124} $cols="68px 40px">
            <IconButton $on $w={44} $h={44} aria-label="Kein Textumfluss"><Wrap kind="none" /></IconButton>
            <IconButton aria-label="Begrenzungsrahmen"><Wrap kind="box" /></IconButton>
            <IconButton aria-label="Objektform"><Wrap kind="shape" /></IconButton>
            <IconButton aria-label="Objekt überspringen"><Wrap kind="jump" /></IconButton>
          </Group>
          <Group $w={238} $cols="53px 172px">
            <CornerOptions />
            <Field id="corner" label="Eckengröße" tone="edit" w={172} value="4,233 mm" pad={6} />
            <span />
            <StrokeSample $corner>
              <Swatch><Ic w={130} h={36}><path d="M1 5h116v31" stroke="#000" strokeWidth="3" /></Ic></Swatch>
              <DropButton $lined aria-label="Eckenform"><Chevron c="#fff" /></DropButton>
            </StrokeSample>
          </Group>
          <Group $cols="60px" $align="end"><Tall $col={1}><IconButton aria-label="Schnellaktionen"><Bolt /></IconButton></Tall></Group>
          <Group $w={56}>
            <IconButton aria-label="Einstellungen"><Gear /></IconButton>
            <IconButton aria-label="Menü"><Lines w={24} n={3} gap={6} /></IconButton>
          </Group>
        </ControlBar>

        <Body>
          <ToolColumn>
            <ColumnHead><DoubleArrow /></ColumnHead>
            <Grip />
            <Tools>
              {tools.map((t, i) => t === 'rule'
                ? <ToolRule key={i} />
                : <ToolButton key={t.name} $on={t.on} $more={t.more} aria-label={t.name}>{t.icon}</ToolButton>)}
              <Pair $h={26}>
                <Ic w={24} h={24}>
                  <rect x="7" y="7" width="16" height="16" fill="#000" stroke="#bbb" strokeWidth="2" />
                  <rect x="12" y="12" width="6" height="6" stroke="#bbb" strokeWidth="2" />
                  <rect x="1" y="1" width="16" height="16" fill="#fff" stroke="#bbb" strokeWidth="2" />
                  <rect x="3" y="3" width="12" height="12" stroke="#000" strokeWidth="2" />
                  <path d="M5 14l9-9" stroke="#f33" strokeWidth="1.500" />
                </Ic>
                <Ic w={22} h={22}>
                  <path d="M5 6c8-1 11 3 11 11" stroke="currentColor" strokeWidth="4" />
                  <path d="M0 6 7 0v12zM10 15h12l-6 7z" fill="currentColor" />
                </Ic>
              </Pair>
              <FillStroke>
                <FillCell aria-label="Fläche"><NoneFill s={39} /></FillCell>
                <StrokeCell aria-label="Kontur"><NoneStroke s={39} /></StrokeCell>
              </FillStroke>
              <Pair $h={24}>
                <IconButton $on $w={28} $h={24} aria-label="Rahmen"><Ic w={16} h={16}><rect x="1" y="1" width="14" height="14" fill="#777" stroke="currentColor" strokeWidth="2" /></Ic></IconButton>
                <TypeText>T</TypeText>
              </Pair>
            </Tools>
            <Tools>
              <ToolButton $on $more aria-label="Keine">
                <Ic w={32} h={28}>
                  <rect x="1" y="1" width="30" height="26" fill="#fff" stroke="#999" strokeWidth="2" />
                  <path d="M4 25 29 3" stroke="#f60505" strokeWidth="4" />
                </Ic>
              </ToolButton>
            </Tools>
            <Tools>
              <ToolButton aria-label="Ansichtsoptionen">
                <Ic w={26} h={20}>
                  <path d="M8 8h18v12H8zM7 0h2v8H0V6h7zM12 0h2v4h-2zM18 0h2v4h-2zM24 0h2v4h-2zM0 12h4v2H0zM0 18h6v2H0z" fill="currentColor" />
                </Ic>
              </ToolButton>
            </Tools>
            <Tools>
              <ToolButton $on $more aria-label="Bildschirmmodus">
                <Ic w={22} h={22}>
                  <rect x="1" y="1" width="20" height="20" fill="#777" stroke="currentColor" strokeWidth="2" />
                  <path d="M0 0h22v4H0z" fill="currentColor" />
                  <path d="M5 7h7v6H5zM14 11h3v6H9v-2" fill="#333" stroke="currentColor" strokeWidth="2" />
                </Ic>
              </ToolButton>
            </Tools>
          </ToolColumn>
          <VDivider />

          <DocArea>
            <TabStrip>
              <DocTab>
                <button aria-label="Dokument schließen"><Ic w={14} h={14}><path d="M1.500 1.500l11 11M12.500 1.500l-11 11" stroke="#e6e6e6" strokeWidth="2" /></Ic></button>
                *Unbenannt–1 @ 42 % [GPU–Vorschau]
              </DocTab>
            </TabStrip>
            <RulerRow>
              <RulerCorner>
                <Ic w={30} h={29} c="#b0b0b0"><path d="M0 9h30M9 0v29" stroke="currentColor" strokeWidth="2" strokeDasharray="2 2" /></Ic>
              </RulerCorner>
              <HStrip>
                {hMarks.map((m, i) => <HCell key={i}><span>{m}</span><HTicks /></HCell>)}
              </HStrip>
              <Gutter />
            </RulerRow>
            <Band><i /><b /><Gutter /></Band>
            <CanvasRow>
              <VStrip>
                {vMarks.map((m, i) => <VCell key={i}><span>{m}</span><VTicks /></VCell>)}
              </VStrip>
              <Pasteboard><Spread><PageArea /><PageArea /></Spread></Pasteboard>
              <Gutter />
            </CanvasRow>
            <Band $low><i /><b /><Gutter /></Band>
            <StatusBar>
              <StatusSelect $w={102} $ml={28}>
                <select aria-label="Zoomstufe"><option>42,35 %</option></select><Chevron />
              </StatusSelect>
              <StatusIcon $w={64} aria-label="Erste Seite"><Ic w={16} h={16}><path d="M0 0h4v16H0zM16 0v16L6 8z" fill="currentColor" /></Ic></StatusIcon>
              <StatusIcon $w={20} aria-label="Vorherige Seite"><Ic w={9} h={16}><path d="M9 0v16L0 8z" fill="currentColor" /></Ic></StatusIcon>
              <StatusSelect $w={180} $ml={20} $boxed>
                <select aria-label="Seite"><option>B–Musterseite</option></select><Chevron />
              </StatusSelect>
              <StatusIcon $w={60} aria-label="Nächste Seite"><Ic w={9} h={16} c={DIM}><path d="M0 0v16l9-8z" fill="currentColor" /></Ic></StatusIcon>
              <StatusIcon $w={24} aria-label="Letzte Seite"><Ic w={16} h={16} c={DIM}><path d="M12 0h3v16h-3zM0 0v16l10-8z" fill="currentColor" /></Ic></StatusIcon>
              <StatusIcon $w={94} aria-label="Preflight">
                <Ic w={34} h={26}>
                  <circle cx="13" cy="13" r="11" stroke="currentColor" strokeWidth="4" />
                  <path d="M13 9h5l4 4v9h-9z" fill="#4c4c4c" stroke="currentColor" strokeWidth="2" />
                  <path d="M17 8v6h6" stroke="currentColor" strokeWidth="2" />
                  <path d="M27 21h7l-3.500 5z" fill="currentColor" />
                </Ic>
              </StatusIcon>
              <StatusSelect $w={221} $ml={0}>
                <select aria-label="Profil"><option>[Grundprofil] (Ar...</option></select><Chevron />
              </StatusSelect>
              <Dot />
              <StatusSelect $w={164} $ml={12}>
                <select aria-label="Preflight-Status"><option>Ohne Fehler</option></select><Chevron c="#a8a8a8" />
              </StatusSelect>
              <ScrollTrack />
              <StatusEnd>
                <Ic w={30} h={24}><path d="M1 1h28v22H1zM15 1v22" stroke="currentColor" strokeWidth="2" /></Ic>
                <Ic w={18} h={22} c="#7a7a7a"><path d="M17 4v18M13 8v14M9 12v10M5 16v6M1 20v2" stroke="currentColor" strokeWidth="2" strokeDasharray="2 2" /></Ic>
              </StatusEnd>
            </StatusBar>
          </DocArea>
          <VDivider />

          <RightSide>
            <ColumnHead $between><DoubleArrow left /><DoubleArrow /></ColumnHead>
            <RightBody>
              <IconDock>
                <DockSet>
                  <Grip />
                  <DockButtons>
                    <button aria-label="Kontur"><Ic w={34} h={26}><path d="M0 0h34v2H0zM0 8h34v4H0zM0 19h34v6H0z" fill="currentColor" /></Ic></button>
                    <button aria-label="Farbe">
                      <Ic w={38} h={28}>
                        <path d="M20 0c10 0 18 6 18 14s-8 14-19 14S0 23 0 17c0-4 3-6 7-5 4 1 8 1 9-2 1-4-3-6 0-9 1-1 2-1 4-1Z" fill="currentColor" />
                        <g fill={PANEL}><ellipse cx="9" cy="19" rx="3.500" ry="4" /><ellipse cx="18" cy="22" rx="3.500" ry="3.500" /><ellipse cx="26" cy="20" rx="3" ry="3.500" /><ellipse cx="31.500" cy="16" rx="2.500" ry="3" /><ellipse cx="30" cy="9.500" rx="2.500" ry="3" /></g>
                      </Ic>
                    </button>
                  </DockButtons>
                </DockSet>
              </IconDock>
              <VDivider />
              <Panels>
                <PanelTabs>
                  <PanelTab $on $w={182}><Sort /> Ausrichten</PanelTab>
                  <PanelTab $w={162}>Pathfinder</PanelTab>
                  <TabMenu><button aria-label="Bedienfeldmenü"><Lines /></button></TabMenu>
                </PanelTabs>
                <AlignBody>
                  <PanelHeading>Objekte ausrichten:</PanelHeading>
                  <AlignRow $rule><AlignButtons set={alignA} /><AlignButtons set={alignB} /></AlignRow>
                  <PanelHeading>Objekte verteilen:</PanelHeading>
                  <AlignRow><AlignButtons set={distA} /><AlignButtons set={distB} /></AlignRow>
                  <SpacingRow>
                    <label><Check type="checkbox" /> Abstand verwen...</label>
                    <Field id="gap" label="Abstand" tone="off" w={166} value="0 mm" />
                  </SpacingRow>
                  <AlignTo>
                    Ausrichten an:
                    <button aria-label="Ausrichten an">
                      <Ic w={40} h={28}>
                        <rect x="3" y="3" width="22" height="22" stroke="currentColor" strokeWidth="2" />
                        <path d="M0 0h5v4H0zM23 0h5v4h-5zM0 24h5v4H0zM23 24h5v4h-5zM12 0h4v4h-4zM12 24h4v4h-4zM0 12h4v4H0zM24 12h4v4h-4zM31 22h9l-4.500 6z" fill="currentColor" />
                      </Ic>
                    </button>
                  </AlignTo>
                </AlignBody>
                <PanelGap />
                <PanelTabs>
                  <PanelTab $w={116}>Ebenen</PanelTab>
                  <PanelTab $w={184}>Verknüpfunge</PanelTab>
                  <PanelTab $on $w={124}><Sort /> Seiten</PanelTab>
                  <TabMenu><button aria-label="Bedienfeldmenü"><Lines /></button></TabMenu>
                </PanelTabs>
                <PagesHead>
                  <Lines w={10} n={5} />
                  <SizeSelect>
                    <select aria-label="Seitengröße"><option>A5 V</option></select>
                    <Ic w={12} h={6}><path d="M0 0h12L6 6z" fill="currentColor" /></Ic>
                  </SizeSelect>
                </PagesHead>
                <PageList>
                  <PageItem>
                    <Spine />
                    <Marker width="20" height="10" viewBox="0 0 20 10"><path d="M0 0h20L10 10z" fill={ICON} /></Marker>
                    <Thumb>A</Thumb>
                    <PageNo>1</PageNo>
                  </PageItem>
                  <PageItem>
                    <Spine />
                    <Thumb $left>A</Thumb>
                    <Thumb>A</Thumb>
                    <PageNo $whole>2–3</PageNo>
                  </PageItem>
                </PageList>
                <PagesFoot>
                  <span>2 Muster</span>
                  <button aria-label="Seitenformat bearbeiten">
                    <Ic w={36} h={24}><path d="M11 9V1h8l6 6v15h-9M19 1v6h6M1 9h9l6 5v9H1zM10 9v6h6" stroke="currentColor" strokeWidth="2" /><path d="M30 18h6l-3 5z" fill="currentColor" /></Ic>
                  </button>
                  <button aria-label="Neue Seite"><Ic w={22} h={24}><path d="M1 1h20v22H1zM11 7v10M6 12h10" stroke="currentColor" strokeWidth="2" /></Ic></button>
                  <button aria-label="Löschen"><Ic w={22} h={26}><path d="M0 6h22M7 5V1h8v4M3 7v17h16V7M8 9v12M11 9v12M14 9v12" stroke="currentColor" strokeWidth="2" /></Ic></button>
                </PagesFoot>
              </Panels>
            </RightBody>
          </RightSide>
        </Body>
      </Window>
    </Screen>
  );
}
